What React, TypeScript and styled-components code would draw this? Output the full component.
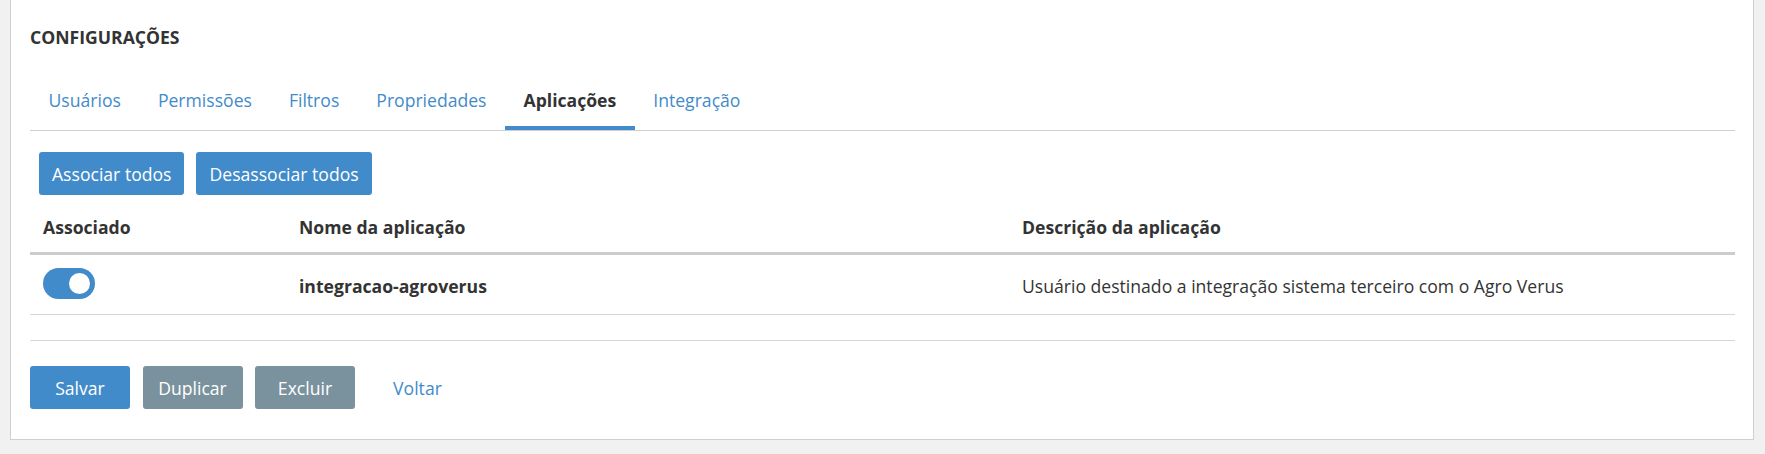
import { useState } from 'react';
import styled, { createGlobalStyle } from 'styled-components';

const GlobalStyle = createGlobalStyle`
  html, body {
    margin: 0;
    padding: 0;
    background: #f1f1f1;
  }
  body {
    font-family: 'Open Sans', 'Noto Sans', sans-serif;
    font-size: 17.6px;
    color: #333;
  }
`;

const tabs = ['Usuários', 'Permissões', 'Filtros', 'Propriedades', 'Aplicações', 'Integração'];

function App() {
  const [active, setActive] = useState('Aplicações');
  const [associated, setAssociated] = useState(true);

  return (
    <>
      <GlobalStyle />
      <Page>
        <Panel>
          <Title>CONFIGURAÇÕES</Title>
          <TabBar>
            {tabs.map((tab) => (
              <Tab key={tab} $active={tab === active} onClick={() => setActive(tab)}>
                {tab}
              </Tab>
            ))}
          </TabBar>

          <Toolbar>
            <Button onClick={() => setAssociated(true)}>Associar todos</Button>
            <Button onClick={() => setAssociated(false)}>Desassociar todos</Button>
          </Toolbar>

          <Table>
            <HeadCell>Associado</HeadCell>
            <HeadCell>Nome da aplicação</HeadCell>
            <HeadCell>Descrição da aplicação</HeadCell>

            <ToggleCell>
              <Switch $on={associated} onClick={() => setAssociated(!associated)}>
                <Knob $on={associated} />
              </Switch>
            </ToggleCell>
            <Cell $bold>integracao-agroverus</Cell>
            <Cell>Usuário destinado a integração sistema terceiro com o Agro Verus</Cell>
          </Table>

          <Divider />

          <Footer>
            <FooterButton>Salvar</FooterButton>
            <FooterButton $variant="muted">Duplicar</FooterButton>
            <FooterButton $variant="muted">Excluir</FooterButton>
            <FooterButton $variant="link">Voltar</FooterButton>
          </Footer>
        </Panel>
      </Page>
    </>
  );
}

export default App;

const Page = styled.div`
  padding: 0 11px 11px 10px;
`;

const Panel = styled.div`
  background: #fff;
  border: 1px solid #cfcfcf;
  border-top: none;
  padding: 26px 18px 30px 19px;
`;

const Title = styled.h2`
  margin: 0;
  font-size: 17.6px;
  line-height: 22px;
  font-weight: 700;
  color: #333;
`;

const TabBar = styled.div`
  display: flex;
  margin-top: 26px;
  border-bottom: 1px solid #d0d0d0;
`;

const Tab = styled.div<{ $active?: boolean }>`
  padding: 15px 18.5px;
  line-height: 22px;
  font-size: 17.6px;
  cursor: pointer;
  border-bottom: 4px solid ${({ $active }) => ($active ? '#428bca' : 'transparent')};
  color: ${({ $active }) => ($active ? '#333' : '#428bca')};
  font-weight: ${({ $active }) => ($active ? 700 : 400)};
`;

const Toolbar = styled.div`
  display: flex;
  gap: 12px;
  padding: 21px 0 0 9px;
`;

const Button = styled.button`
  height: 43px;
  padding: 0 13px;
  border: none;
  border-radius: 3px;
  background: #428bca;
  color: #fff;
  font-family: inherit;
  font-size: 17.6px;
  cursor: pointer;
`;

const Table = styled.div`
  display: grid;
  grid-template-columns: 256px 723px 1fr;
  margin-top: 10px;
`;

const HeadCell = styled.div`
  padding: 11px 13px 14px;
  line-height: 22px;
  font-weight: 700;
  border-bottom: 3px solid #cccccc;
`;

const Cell = styled.div<{ $bold?: boolean }>`
  height: 60px;
  box-sizing: border-box;
  padding: 20px 13px 0;
  line-height: 22px;
  font-weight: ${({ $bold }) => ($bold ? 700 : 400)};
  border-bottom: 1px solid #d6d6d6;
`;

const ToggleCell = styled(Cell)`
  padding-top: 13px;
`;

const Switch = styled.div<{ $on: boolean }>`
  position: relative;
  width: 52px;
  height: 31px;
  border-radius: 16px;
  background: ${({ $on }) => ($on ? '#428bca' : '#ccc')};
  cursor: pointer;
`;

const Knob = styled.span<{ $on: boolean }>`
  position: absolute;
  top: 5px;
  left: ${({ $on }) => ($on ? '26px' : '5px')};
  width: 21px;
  height: 21px;
  border-radius: 50%;
  background: #fff;
`;

const Divider = styled.hr`
  margin: 25px 0 0;
  border: none;
  border-top: 1px solid #d6d6d6;
`;

const Footer = styled.div`
  display: flex;
  gap: 12.5px;
  padding-top: 25px;
`;

const FooterButton = styled.button<{ $variant?: 'primary' | 'muted' | 'link' }>`
  width: 100px;
  height: 43px;
  border: none;
  border-radius: 3px;
  font-family: inherit;
  font-size: 17.6px;
  cursor: pointer;
  background: ${({ $variant }) =>
    $variant === 'muted' ? '#7a929e' : $variant === 'link' ? 'transparent' : '#428bca'};
  color: ${({ $variant }) => ($variant === 'link' ? '#428bca' : '#fff')};
`;
